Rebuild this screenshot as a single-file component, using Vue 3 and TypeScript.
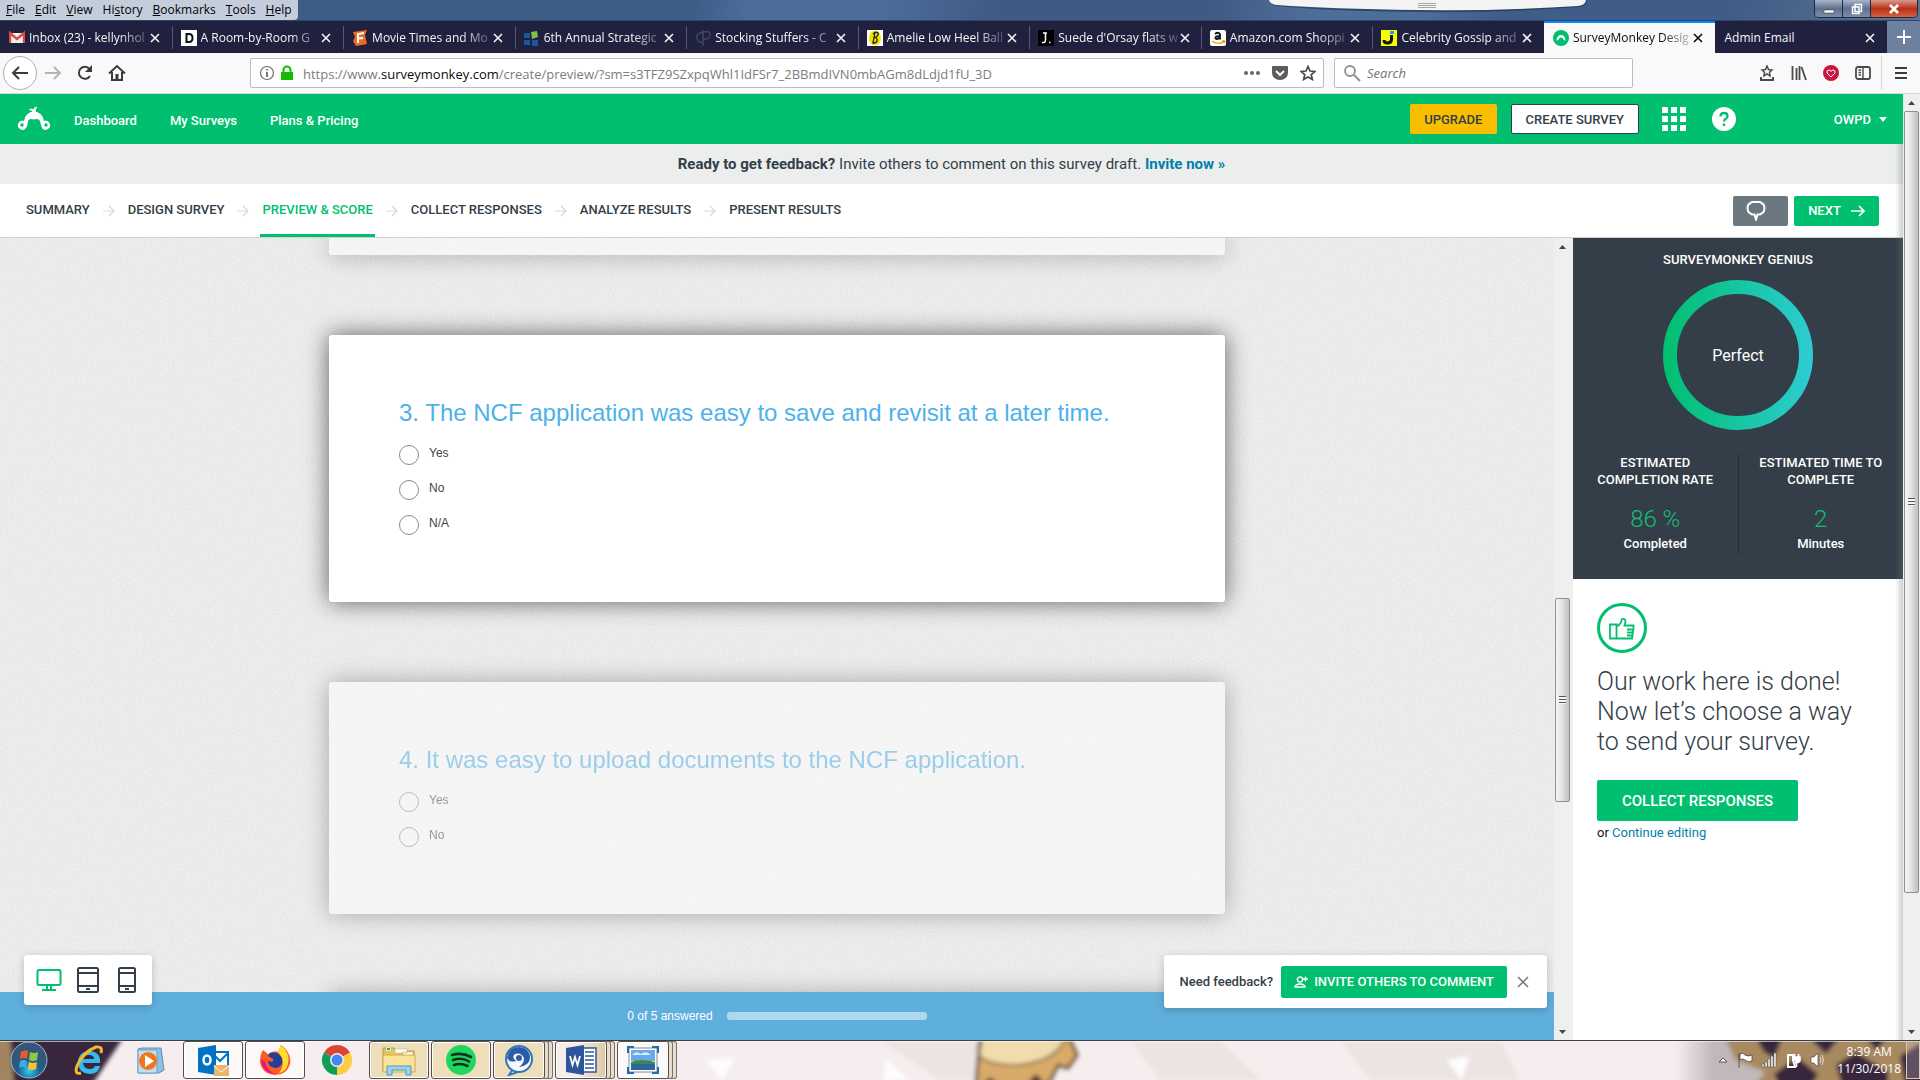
<script setup lang="ts">
import { ref } from 'vue'

interface Tab {
  title: string
  icon: string
  active?: boolean
}

interface Question {
  id: number
  text: string
  options: string[]
  current: boolean
}

const menus: string[][] = [
  ['', 'F', 'ile'],
  ['', 'E', 'dit'],
  ['', 'V', 'iew'],
  ['Hi', 's', 'tory'],
  ['', 'B', 'ookmarks'],
  ['', 'T', 'ools'],
  ['', 'H', 'elp'],
]

const tabs: Tab[] = [
  { title: 'Inbox (23) - kellynhol', icon: 'gmail' },
  { title: 'A Room-by-Room G', icon: 'domino' },
  { title: 'Movie Times and Mo', icon: 'fandango' },
  { title: '6th Annual Strategic', icon: 'squares' },
  { title: 'Stocking Stuffers - C', icon: 'cp' },
  { title: 'Amelie Low Heel Ball', icon: 'bee' },
  { title: "Suede d'Orsay flats w", icon: 'jcrew' },
  { title: 'Amazon.com Shoppi', icon: 'amazon' },
  { title: 'Celebrity Gossip and', icon: 'jared' },
  { title: 'SurveyMonkey Desig', icon: 'monkey', active: true },
  { title: 'Admin Email', icon: '' },
]

const steps = ['SUMMARY', 'DESIGN SURVEY', 'PREVIEW & SCORE', 'COLLECT RESPONSES', 'ANALYZE RESULTS', 'PRESENT RESULTS']
const activeStep = 'PREVIEW & SCORE'

const questions: Question[] = [
  {
    id: 3,
    text: '3. The NCF application was easy to save and revisit at a later time.',
    options: ['Yes', 'No', 'N/A'],
    current: true,
  },
  {
    id: 4,
    text: '4. It was easy to upload documents to the NCF application.',
    options: ['Yes', 'No'],
    current: false,
  },
]

const answers = ref<Record<number, string>>({})
const search = ref('')
</script>

<template>
  <div class="desktop">
    <header class="titlebar">
      <nav class="menubar">
        <button v-for="m in menus" :key="m[1]" type="button">{{ m[0] }}<u>{{ m[1] }}</u>{{ m[2] }}</button>
      </nav>
      <svg class="drawer" viewBox="0 0 320 16" width="320" height="16">
        <path d="M0 0H318Q318 6 310 7Q230 13 150 12Q60 11 8 6Q0 5 0 0Z" fill="#16324f" opacity=".6" />
        <path d="M0 0H317Q317 5 309 6Q230 11 150 10Q60 9 8 5Q0 4 0 0Z" fill="#f4f4f4" />
        <path d="M149 3.500H167M149 5.500H167M149 7.500H167" stroke="#a5a5a5" />
      </svg>
      <div class="window-buttons">
        <button type="button" aria-label="Minimize"><svg width="12" height="12" viewBox="0 0 12 12"><path d="M1 7H11V10H1Z" fill="#fff" stroke="#444" stroke-width=".6" /></svg></button>
        <button type="button" aria-label="Restore"><svg width="12" height="12" viewBox="0 0 12 12"><path d="M4 1.500H10.500V8.500H4ZM1.500 4H8V10.500H1.500Z" fill="#71809b" stroke="#fff" stroke-width="1.500" /></svg></button>
        <button type="button" class="shut" aria-label="Close window"><svg width="12" height="12" viewBox="0 0 12 12"><path d="M2 2L10 10M10 2L2 10" stroke="#fff" stroke-width="2.600" /></svg></button>
      </div>
    </header>

    <nav class="tabs">
      <div v-for="t in tabs" :key="t.title" class="tab" :class="{ active: t.active }">
        <svg v-if="t.icon" class="fav" viewBox="0 0 16 16" width="16" height="16">
          <template v-if="t.icon === 'gmail'">
            <path d="M1 3H15V13H1Z" fill="#f1efef" /><path d="M1 13V3L8 9L15 3V13" fill="none" stroke="#dd4b3e" stroke-width="2.400" />
          </template>
          <template v-else-if="t.icon === 'domino'">
            <path d="M0 0H16V16H0Z" fill="#fff" /><path d="M5.500 4H8Q11.500 4 11.500 8T8 12H5.500Z" fill="none" stroke="#111" stroke-width="2" />
          </template>
          <template v-else-if="t.icon === 'fandango'">
            <path d="M1 2L15 0L13 5L15 14L4 16L1 11L3 7Z" fill="#f26a21" /><path d="M6 13V4L12 3M6 8.500L11 8" stroke="#fff" stroke-width="2" fill="none" />
          </template>
          <template v-else-if="t.icon === 'squares'">
            <path d="M0 3H6V8H0ZM0 10H6V15H0ZM8 10H14V16H8Z" fill="#1b57a0" /><path d="M7 2L13 1L14 7L8 9Z" fill="#7fc242" />
          </template>
          <template v-else-if="t.icon === 'cp'">
            <path d="M9 3A5 5 0 1 0 9 12M8 0V16M8 2Q15 0 15 5T8 9" fill="none" stroke="#3c4656" stroke-width="1.600" />
          </template>
          <template v-else-if="t.icon === 'bee'">
            <path d="M0 0H16V16H0Z" fill="#fff" /><ellipse cx="8" cy="8" rx="6" ry="7.500" fill="#f3e100" /><path d="M8 2L6 13Q11 13 10 9Q9 7 7 8Q12 6 11 3Q9 1 6 4" fill="none" stroke="#222" stroke-width="1.300" />
          </template>
          <template v-else-if="t.icon === 'jcrew'">
            <path d="M0 0H16V16H0Z" fill="#000" /><path d="M5 3H9M7.500 3V10Q7.500 13 4 12.500M11 12.500H12.500" fill="none" stroke="#fff" stroke-width="1.500" />
          </template>
          <template v-else-if="t.icon === 'amazon'">
            <rect width="16" height="16" rx="2" fill="#fff" /><path d="M5 4Q8 1.500 10 4V9.500M10 6Q5 6 5.500 8.300Q7 10 10 7.500" fill="none" stroke="#111" stroke-width="1.800" /><path d="M2 11Q8 15.500 14 11.500M12 11H14.500V13" fill="none" stroke="#f90" stroke-width="1.400" />
          </template>
          <template v-else-if="t.icon === 'jared'">
            <path d="M0 0H16V16H0Z" fill="#f5ff00" /><path d="M10.500 5V10Q10 13 6.500 13T3 10" fill="none" stroke="#111" stroke-width="3" /><path d="M9 1H13V4H9Z" fill="#2b9be8" />
          </template>
          <template v-else>
            <circle cx="8" cy="8" r="8" fill="#00bf6f" /><path d="M3.500 10.500Q4 5 8 5T12.500 10.500Q10 10.500 10 8.500Q8 6.500 6 8.500Q6 10.500 3.500 10.500Z" fill="#fff" />
          </template>
        </svg>
        <span class="tab-title" :class="{ fades: t.icon }">{{ t.title }}</span>
        <button type="button" class="tab-close" aria-label="Close tab">
          <svg width="10" height="10" viewBox="0 0 10 10"><path d="M1 1L9 9M9 1L1 9" stroke="currentColor" stroke-width="1.600" /></svg>
        </button>
      </div>
      <button type="button" class="tab-add" aria-label="New tab">
        <svg width="14" height="14" viewBox="0 0 14 14"><path d="M7 0V14M0 7H14" stroke="#fff" stroke-width="2" /></svg>
      </button>
    </nav>

    <div class="toolbar">
      <button type="button" class="tool back" aria-label="Back">
        <svg width="18" height="18" viewBox="0 0 18 18"><path d="M17 9H2M8 3L2 9L8 15" fill="none" stroke="#3b3b3d" stroke-width="2" /></svg>
      </button>
      <button type="button" class="tool" aria-label="Forward">
        <svg width="18" height="18" viewBox="0 0 18 18"><path d="M1 9H16M10 3L16 9L10 15" fill="none" stroke="#b4b4b6" stroke-width="2" /></svg>
      </button>
      <button type="button" class="tool" aria-label="Reload">
        <svg width="18" height="18" viewBox="0 0 18 18"><path d="M14 12A6 6 0 1 1 13.500 5" fill="none" stroke="#3b3b3d" stroke-width="2" /><path d="M16 1V8H9Z" fill="#3b3b3d" /></svg>
      </button>
      <button type="button" class="tool" aria-label="Home">
        <svg width="18" height="18" viewBox="0 0 18 18"><path d="M1 9.500L9 2L17 9.500M4 8V16H14V8" fill="none" stroke="#3b3b3d" stroke-width="2" /><path d="M7.500 10H10.500V16H7.500Z" fill="#3b3b3d" /></svg>
      </button>
      <div class="urlbar">
        <svg width="16" height="16" viewBox="0 0 16 16"><circle cx="8" cy="8" r="6.500" fill="none" stroke="#6b6b6d" stroke-width="1.200" /><path d="M8 7V12M8 4V5.500" stroke="#6b6b6d" stroke-width="1.800" /></svg>
        <svg width="16" height="16" viewBox="0 0 16 16"><path d="M2 7H14V15H2Z" fill="#12bc00" /><path d="M4.500 8V5A3.500 3.500 0 0 1 11.500 5V8" fill="none" stroke="#12bc00" stroke-width="2" /></svg>
        <a href="#" class="url">https://www.<b>surveymonkey.com</b>/create/preview/?sm=s3TFZ9SZxpqWhl1IdFSr7_2BBmdIVN0mbAGm8dLdjd1fU_3D</a>
        <svg width="16" height="16" viewBox="0 0 16 16"><circle cx="2" cy="8" r="2" fill="#666" /><circle cx="8" cy="8" r="2" fill="#666" /><circle cx="14" cy="8" r="2" fill="#666" /></svg>
        <svg width="16" height="16" viewBox="0 0 16 16"><path d="M0 2Q0 1 1 1H15Q16 1 16 2V8A8 7 0 0 1 0 8Z" fill="#5c5c5e" /><path d="M4 6L8 10L12 6" fill="none" stroke="#fff" stroke-width="2" /></svg>
        <svg width="16" height="16" viewBox="0 0 16 16"><path d="M8 1.500L10 6L15 6.400L11.200 9.700L12.400 14.500L8 12L3.600 14.500L4.800 9.700L1 6.400L6 6Z" fill="none" stroke="#4a4a4c" stroke-width="1.700" /></svg>
      </div>
      <label class="searchbar">
        <svg width="18" height="18" viewBox="0 0 18 18"><circle cx="7" cy="7" r="5" fill="none" stroke="#8f8f91" stroke-width="1.800" /><path d="M11 11L17 17" stroke="#8f8f91" stroke-width="2" /></svg>
        <input v-model="search" type="text" placeholder="Search" aria-label="Search" />
      </label>
      <div class="tool-icons">
        <svg width="16" height="16" viewBox="0 0 16 16"><path d="M8 1L9.500 4.500L13 5L10.500 7.300L11 11L8 9L5 11L5.500 7.300L3 5L6.500 4.500Z" fill="none" stroke="#4a4a4c" stroke-width="1.500" /><path d="M2 12V15H14V12" fill="none" stroke="#4a4a4c" stroke-width="2" /></svg>
        <svg width="16" height="16" viewBox="0 0 16 16"><path d="M1.500 1V15M5.500 3V15M8.500 1V15M10.500 2L15 15" stroke="#4a4a4c" stroke-width="1.800" /></svg>
        <svg width="16" height="16" viewBox="0 0 16 16"><circle cx="8" cy="8" r="8" fill="#c8173f" /><path d="M8 12L4 8Q3.500 5 6 5Q7.500 5 8 6.500Q8.500 5 10 5Q12.500 5 12 8Z" fill="none" stroke="#fff" /></svg>
        <svg width="16" height="16" viewBox="0 0 16 16"><rect x="1" y="2" width="14" height="12" rx="2" fill="none" stroke="#4a4a4c" stroke-width="1.800" /><path d="M8 2V14M3.500 5H6M3.500 7.500H6M3.500 10H6" stroke="#4a4a4c" stroke-width="1.400" /></svg>
      </div>
      <button type="button" class="burger" aria-label="Menu">
        <svg width="12" height="12" viewBox="0 0 12 12"><path d="M0 1H12M0 6H12M0 11H12" stroke="#3b3b3d" stroke-width="2" /></svg>
      </button>
    </div>

    <div class="viewport">
      <div class="page">
        <header class="brandbar">
          <a href="#" class="logo" aria-label="Home page">
            <svg width="36" height="26" viewBox="0 0 36 26">
              <path d="M8 15Q9.500 6 18 5.500Q26.500 6 28 15A4.500 4.500 0 1 1 26 22Q24 16 24 15Q22.500 12 18 13.500Q13.500 12 12 15Q12 19 10 22A4.500 4.500 0 1 1 8 15Z" fill="#fff" />
              <path d="M18 7Q15 3 13.500 3.500Q16 2.500 18 4Q18 1.500 20.500 1Q18.800 3 19.500 7Z" fill="#fff" stroke="#fff" />
              <circle cx="6" cy="19" r="1.700" fill="#00bf6f" /><circle cx="30" cy="19" r="1.700" fill="#00bf6f" />
            </svg>
          </a>
          <nav class="brand-links">
            <a href="#">Dashboard</a>
            <a href="#">My Surveys</a>
            <a href="#">Plans &amp; Pricing</a>
          </nav>
          <button type="button" class="upgrade">UPGRADE</button>
          <button type="button" class="create">CREATE SURVEY</button>
          <button type="button" class="glyph apps" aria-label="Apps">
            <svg width="24" height="24" viewBox="0 0 24 24"><path d="M0 0H6V6H0ZM9 0H15V6H9ZM18 0H24V6H18ZM0 9H6V15H0ZM9 9H15V15H9ZM18 9H24V15H18ZM0 18H6V24H0ZM9 18H15V24H9ZM18 18H24V24H18Z" fill="#fff" /></svg>
          </button>
          <button type="button" class="glyph help" aria-label="Help">
            <svg width="24" height="24" viewBox="0 0 24 24"><circle cx="12" cy="12" r="12" fill="#fff" /><path d="M8.500 9.500Q8.500 6 12 6T15.500 9.200Q15.500 11 13.500 12Q12 12.800 12 14.500M12 16.500V19" fill="none" stroke="#00bf6f" stroke-width="2.300" /></svg>
          </button>
          <button type="button" class="account">OWPD <svg width="8" height="5" viewBox="0 0 8 5"><path d="M0 0H8L4 5Z" fill="#fff" /></svg></button>
        </header>

        <p class="notice"><b>Ready to get feedback?</b> Invite others to comment on this survey draft. <a href="#">Invite now »</a></p>

        <div class="stepbar">
          <nav class="steps">
            <template v-for="(s, i) in steps" :key="s">
              <svg v-if="i" width="12" height="12" viewBox="0 0 12 12"><path d="M0 6H11M6 1L11 6L6 11" fill="none" stroke="#d5d8da" stroke-width="1.200" /></svg>
              <a href="#" :class="{ on: s === activeStep }">{{ s }}</a>
            </template>
          </nav>
          <button type="button" class="comment" aria-label="Comments">
            <svg width="22" height="20" viewBox="0 0 22 20"><path d="M7 1H15L18.500 3.500Q20.500 7 18.500 11L15 13.500H12.500L11 18.500L9.500 13.500H7L3.500 11Q1.500 7 3.500 3.500Z" fill="none" stroke="#fff" stroke-width="2" /></svg>
          </button>
          <button type="button" class="next">NEXT <svg width="14" height="12" viewBox="0 0 14 12"><path d="M0 6H13M8 1L13 6L8 11" fill="none" stroke="#fff" stroke-width="1.600" /></svg></button>
        </div>

        <div class="workspace">
          <main class="preview">
            <svg class="grain" aria-hidden="true">
              <filter id="grain"><feTurbulence type="fractalNoise" baseFrequency=".6" numOctaves="2" seed="4" /><feColorMatrix values="0 0 0 0 .38  0 0 0 0 .38  0 0 0 0 .38  .25 0 0 0 -.07" /></filter>
              <rect width="100%" height="100%" filter="url(#grain)" />
            </svg>
            <div class="cards">
              <section class="card faded tail"></section>
              <section v-for="q in questions" :key="q.id" class="card" :class="{ faded: !q.current }">
                <fieldset>
                  <legend>{{ q.text }}</legend>
                  <label v-for="o in q.options" :key="o" class="option">
                    <input v-model="answers[q.id]" type="radio" :name="'q' + q.id" :value="o" />
                    <span>{{ o }}</span>
                  </label>
                </fieldset>
              </section>
              <section class="card faded upcoming"></section>
            </div>
            <footer class="progressbar">
              <span>0 of 5 answered</span>
              <span class="meter"></span>
            </footer>
            <div class="devices">
              <button type="button" aria-label="Desktop"><svg width="26" height="24" viewBox="0 0 26 24"><rect x="1.500" y="2" width="23" height="15" rx="1.500" fill="none" stroke="#00bf6f" stroke-width="2" /><path d="M11 17V21M15 17V21M6 22H20" stroke="#00bf6f" stroke-width="2" /></svg></button>
              <button type="button" aria-label="Tablet"><svg width="22" height="26" viewBox="0 0 22 26"><rect x="1" y="1" width="20" height="24" rx="1.500" fill="none" stroke="#333e48" stroke-width="2" /><path d="M1 6H21M1 19H21M9 22H13" stroke="#333e48" stroke-width="2" /></svg></button>
              <button type="button" aria-label="Phone"><svg width="18" height="26" viewBox="0 0 18 26"><rect x="1" y="1" width="16" height="24" rx="1.500" fill="none" stroke="#333e48" stroke-width="2" /><path d="M1 6H17M1 19H17M7 22H11" stroke="#333e48" stroke-width="2" /></svg></button>
            </div>
            <div class="feedback">
              <b>Need feedback?</b>
              <button type="button" class="invite"><svg width="14" height="12" viewBox="0 0 14 12"><circle cx="6" cy="3.500" r="2.600" fill="none" stroke="#fff" stroke-width="1.400" /><path d="M1 11Q1.500 8 6 8T11 11ZM9 3H14M11.500 .5V5.500" fill="none" stroke="#fff" stroke-width="1.300" /></svg>INVITE OTHERS TO COMMENT</button>
              <button type="button" class="dismiss" aria-label="Dismiss"><svg width="12" height="12" viewBox="0 0 12 12"><path d="M1 1L11 11M11 1L1 11" stroke="#6b787f" stroke-width="1.500" /></svg></button>
            </div>
          </main>

          <div class="scroll inner">
            <svg width="17" height="17" viewBox="0 0 17 17"><path d="M5 11H12L8.500 7Z" fill="#444" /></svg>
            <i class="before"></i>
            <i class="thumb"><i class="grip"></i></i>
            <i class="after"></i>
            <svg width="17" height="17" viewBox="0 0 17 17"><path d="M5 7H12L8.500 11Z" fill="#444" /></svg>
          </div>

          <aside class="side">
            <section class="genius">
              <h2>SURVEYMONKEY GENIUS</h2>
              <div class="ring">
                <svg width="150" height="150" viewBox="0 0 150 150">
                  <defs><linearGradient id="score" gradientUnits="userSpaceOnUse" x1="0" y1="0" x2="150" y2="0"><stop offset="0" stop-color="#00bf6f" /><stop offset="1" stop-color="#2dccd3" /></linearGradient></defs>
                  <circle cx="75" cy="75" r="68" fill="none" stroke="url(#score)" stroke-width="14" />
                </svg>
                <span>Perfect</span>
              </div>
              <div class="stats">
                <div><h3>ESTIMATED<br />COMPLETION RATE</h3><strong>86 %</strong><em>Completed</em></div>
                <div><h3>ESTIMATED TIME TO<br />COMPLETE</h3><strong>2</strong><em>Minutes</em></div>
              </div>
            </section>
            <section class="done">
              <svg width="50" height="50" viewBox="0 0 50 50"><circle cx="25" cy="25" r="23.500" fill="none" stroke="#00bf6f" stroke-width="3" /><path d="M13 21.500H19.500V35.500H13ZM19.500 22.500H21.500Q24.500 20 25 16Q28.500 15 28.500 19L27.500 22.500H36.500V25.500L35 35.500H19.500M30 26.500H36.500M30 29.500H36M30 32.500H35.500" fill="none" stroke="#00bf6f" stroke-width="1.800" /></svg>
              <h2>Our work here is done!<br />Now let’s choose a way<br />to send your survey.</h2>
              <button type="button" class="collect">COLLECT RESPONSES</button>
              <p>or <a href="#">Continue editing</a></p>
            </section>
          </aside>
        </div>
      </div>

      <div class="scroll outer">
        <svg width="17" height="17" viewBox="0 0 17 17"><path d="M5 11H12L8.500 7Z" fill="#444" /></svg>
        <i class="thumb"><i class="grip"></i></i>
        <i class="after"></i>
        <svg width="17" height="17" viewBox="0 0 17 17"><path d="M5 7H12L8.500 11Z" fill="#444" /></svg>
      </div>
    </div>

    <footer class="taskbar">
      <svg class="wallpaper" viewBox="0 0 1920 40" preserveAspectRatio="none" aria-hidden="true">
        <defs>
          <filter id="soft"><feGaussianBlur stdDeviation="2" /></filter>
          <linearGradient id="fade"><stop offset="0" stop-color="#f6eeee" /><stop offset=".15" stop-color="#c0b8ba" /><stop offset="1" stop-color="#c0b8ba" /></linearGradient>
        </defs>
        <path d="M0 0H1920V40H0Z" fill="#f6eeee" />
        <g filter="url(#soft)">
          <path d="M-5 -5H125L92 45H-5Z" fill="#37263c" /><path d="M-5 -5H10L14 45H-5Z" fill="#a18560" />
          <path d="M880 0H1000L1010 40H940ZM1130 0H1220L1260 40H1160ZM1340 0H1500L1520 40H1370Z" fill="#ece3e3" />
          <path d="M706 20L735 18L722 40ZM886 20L910 40H884ZM1446 20L1470 16L1462 40Z" fill="#fdfdfd" />
          <path d="M980 -5H1068L1077 15L1068 28L1058 25L1048 45H976Z" fill="#d9ab6a" stroke="#55453a" stroke-width="3" />
          <path d="M982 -5H1066Q1060 20 1020 25Q990 26 979 16Z" fill="#f1dcae" stroke="#7a5e38" stroke-width="2" />
          <path d="M984 45Q990 30 997 45M1028 45Q1036 24 1044 45" fill="#5c4637" />
          <path d="M1675 -5H1930V45H1675Z" fill="url(#fade)" />
          <path d="M1724 -5H1930V45H1755L1765 32L1735 20Z" fill="#a98a60" />
          <path d="M1754 -5H1784L1774 18L1764 12ZM1806 -5H1842L1826 14ZM1774 34L1797 17L1818 34L1812 45H1779ZM1864 -5H1890L1876 10ZM1836 25L1856 12L1888 32V45H1842ZM1900 16L1925 0V45H1905Z" fill="#37263c" />
        </g>
        <path d="M0 .5H1920" stroke="#3a3f47" /><path d="M0 1.500H1920" stroke="#fff" opacity=".6" />
      </svg>
      <div class="apps-row">
        <button type="button" class="app start" aria-label="Start"><svg width="38" height="38" viewBox="0 0 38 38"><defs><radialGradient id="orb" cy=".8"><stop offset="0" stop-color="#2fd0f8" /><stop offset=".6" stop-color="#1d5e8c" /><stop offset="1" stop-color="#35567a" /></radialGradient></defs><circle cx="19" cy="19" r="18" fill="url(#orb)" stroke="#9fbccb" /><path d="M11 11Q15 8 18 10L17 18Q14 16 10 18Z" fill="#ea5b2a" /><path d="M20 11Q24 13 28 11L27 19Q23 21 19 19Z" fill="#93c83e" /><path d="M10 20Q14 18 17 20L16 27Q13 25 9 27Z" fill="#48a6e2" /><path d="M19 21Q23 23 27 21L26 28Q22 30 18 28Z" fill="#fbc32c" /></svg></button>
        <button type="button" class="app" aria-label="Internet Explorer"><svg width="32" height="32" viewBox="0 0 32 32"><path d="M27 19H10Q11 25 17 25Q21 25 22 22H27Q25 30 17 30Q5 29 5 18Q6 7 17 7Q28 8 27 19ZM10 15H21Q21 11 16 11Q11 11 10 15Z" fill="#37b8ee" /><path d="M28 9Q30 2 23 3Q10 8 4 22Q1 31 8 29" fill="none" stroke="#f0bd28" stroke-width="3" /></svg></button>
        <button type="button" class="app" aria-label="Media Player"><svg width="32" height="32" viewBox="0 0 32 32"><path d="M7 4H26L29 26L24 29H3V5Z" fill="#8fc0e2" stroke="#5a91ba" /><path d="M3 6H22V29H3Z" fill="#c4def0" stroke="#6ba0c5" /><circle cx="13" cy="17" r="9" fill="#f0761e" /><path d="M10 11L19 17L10 23Z" fill="#fff" /></svg></button>
        <button type="button" class="app open" aria-label="Outlook"><svg width="32" height="32" viewBox="0 0 32 32"><path d="M18 8H31V24H18Z" fill="#fff" stroke="#0072c6" stroke-width="2" /><path d="M18 12L23 17L31 9" fill="none" stroke="#0072c6" stroke-width="2" /><path d="M1 4L19 1V31L1 28Z" fill="#0072c6" /><ellipse cx="10" cy="16" rx="3.500" ry="4.500" fill="none" stroke="#fff" stroke-width="2.500" /><path d="M17 21H32V32H17Z" fill="#eab36e" /><path d="M17 22L24 28L32 22" fill="none" stroke="#fff" /></svg></button>
        <button type="button" class="app open" aria-label="Firefox"><svg width="32" height="32" viewBox="0 0 32 32"><path d="M4 6L9 10Q15 6 19 8L22 1Q33 9 31 20Q28 31 16 31Q3 30 1 18Q1 10 4 6Z" fill="#ff5a25" /><path d="M22 1Q32 10 29 20Q27 28 20 29Q28 19 19 8Z" fill="#ffdd30" /><path d="M11 9Q19 7 23 14Q25 22 17 24Q9 23 9 17Q16 19 14 15L9 12Z" fill="#1f3f99" /><path d="M2 15Q3 30 18 30Q8 28 6 18Z" fill="#e31587" /></svg></button>
        <button type="button" class="app" aria-label="Chrome"><svg width="32" height="32" viewBox="0 0 32 32"><path d="M16 16L3 8.500A15 15 0 0 1 29 8.500Z" fill="#db4437" /><path d="M16 16L29 8.500A15 15 0 0 1 16 31Z" fill="#ffcd40" /><path d="M16 16L16 31A15 15 0 0 1 3 8.500Z" fill="#0f9d58" /><circle cx="16" cy="16" r="7" fill="#f1f1f1" /><circle cx="16" cy="16" r="5.500" fill="#4285f4" /></svg></button>
        <button type="button" class="app open tan" aria-label="Explorer"><svg width="34" height="32" viewBox="0 0 34 32"><path d="M1 4H12L14 7H32V27H1Z" fill="#e9c558" stroke="#bd963a" /><path d="M4 3H9V7H4ZM13 5H25V9H13ZM21 8H31V12H21Z" fill="#fff" stroke="#b9aa80" stroke-width=".5" /><path d="M5 4H8V6H5Z" fill="#3aab3a" /><path d="M1 11H33V28H1Z" fill="#f7e399" stroke="#d0ad50" /><path d="M5 31V22H29V31H24V26H10V31Z" fill="#9bd2ee" stroke="#4c9ac4" /></svg></button>
        <button type="button" class="app open tan" aria-label="Spotify"><svg width="30" height="30" viewBox="0 0 30 30"><circle cx="15" cy="15" r="15" fill="#1ed760" /><path d="M6 10Q16 7 25 12M7 15Q16 12 23 16.500M8 20Q15 17.500 21.500 21" fill="none" stroke="#17301e" stroke-width="2.600" stroke-linecap="round" /></svg></button>
        <button type="button" class="app open tan stack" aria-label="Chat"><svg width="30" height="32" viewBox="0 0 30 32"><path d="M9 25L5 31L17 27Z" fill="#f4f8fc" stroke="#3477b8" stroke-width="2" /><circle cx="15" cy="15" r="13" fill="#f4f8fc" stroke="#3477b8" stroke-width="2" /><path d="M3 14Q5 3 15 3Q26 4 26 14Q25 22 15 23Q20 20 20 14Q17 8 11 10Q7 13 12 17Q6 19 3 14Z" fill="#2a5ca8" /><circle cx="15" cy="14" r="3" fill="#2a5ca8" /></svg></button>
        <button type="button" class="app open tan stack two" aria-label="Word"><svg width="32" height="32" viewBox="0 0 32 32"><path d="M16 4H31V28H16Z" fill="#fff" stroke="#2b579a" stroke-width="1.500" /><path d="M20 8H29M20 12H29M20 16H29M20 20H29M20 24H29" stroke="#2b579a" stroke-width="1.500" /><path d="M1 4L19 1V31L1 28Z" fill="#2b579a" /><path d="M5 12L7.500 21L10 13L12.500 21L15 12" fill="none" stroke="#fff" stroke-width="1.800" /></svg></button>
        <button type="button" class="app open stack" aria-label="Pictures"><svg width="32" height="28" viewBox="0 0 32 28"><path d="M2 2H30V26H2Z" fill="#fff" stroke="#888" /><path d="M4 4H28V15H4Z" fill="#69a9ea" /><path d="M5 9Q9 4 14 8Q19 4 24 9Z" fill="#d8ecfa" /><path d="M4 16Q14 12 28 16V20H4Z" fill="#3b8a4c" /><path d="M4 18H28V24H4Z" fill="#2c679a" /><path d="M1 7V1H7M25 1H31V7M31 21V27H25M7 27H1V21" fill="none" stroke="#1f6fb0" stroke-width="2" /></svg></button>
      </div>
      <div class="tray">
        <svg width="12" height="16" viewBox="0 0 12 16"><path d="M2 10L6 6L10 10Z" fill="#fff" stroke="#555" /></svg>
        <svg width="16" height="16" viewBox="0 0 16 16"><path d="M2 1V16M3 2Q6 0 8 3Q11 5 15 3V9Q11 11 8 8Q6 6 3 8Z" fill="#fff" stroke="#333" stroke-width=".7" /></svg>
        <svg width="16" height="16" viewBox="0 0 16 16"><path d="M1 12H3V15H1ZM4 10H6V15H4ZM7 7H9V15H7ZM10 4H12V15H10ZM13 1H15V15H13Z" fill="#fff" stroke="#444" stroke-width=".5" /></svg>
        <svg width="16" height="16" viewBox="0 0 16 16"><path d="M3 3H8V8Q9 12 10 15H3Z" fill="none" stroke="#fff" stroke-width="2" /><path d="M8 5H15V9Q14 11 11.500 11V15M9.500 2V5M13.500 2V5" fill="#fff" stroke="#fff" stroke-width="1.600" /></svg>
        <svg width="16" height="16" viewBox="0 0 16 16"><path d="M2 5H5L9 1V15L5 11H2Z" fill="#fff" stroke="#333" stroke-width=".6" /><path d="M11 5Q13 8 11 11M13 3Q16 8 13 13" fill="none" stroke="#ddd" /></svg>
        <time><span>8:39 AM</span><span>11/30/2018</span></time>
        <button type="button" class="peek" aria-label="Show desktop"></button>
      </div>
    </footer>
  </div>
</template>

<style>
html,
body {
  height: 100%;
  overflow: hidden;
}
</style>

<style scoped>
.desktop {
  --green: #00bf6f;
  --ink: #333e48;
  --sys: 'Open Sans', 'Noto Sans', sans-serif;
  display: flex;
  flex-direction: column;
  height: 100vh;
  font-family: Roboto, 'Liberation Sans', sans-serif;
  color: var(--ink);
}
.desktop *,
.desktop *::before,
.desktop *::after {
  box-sizing: border-box;
}
button {
  display: flex;
  align-items: center;
  justify-content: center;
  padding: 0;
  border: 0;
  background: none;
  font: inherit;
  color: inherit;
  white-space: nowrap;
}
a {
  color: inherit;
  text-decoration: none;
}
svg {
  flex: none;
  display: block;
}
h2,
h3,
p {
  margin: 0;
}

.titlebar {
  position: relative;
  display: flex;
  justify-content: space-between;
  height: 21px;
  background: linear-gradient(100deg, #3d5c86 0 36%, #4d6c99 39% 46%, #3f5b84 52% 63%, #4f6d99 68% 74%, #405d87 78% 90%, #5d7292);
  border-bottom: 1px solid #2b4567;
}
.menubar {
  display: flex;
  height: 20px;
  gap: 10px;
  padding: 0 6px;
  border-radius: 0 0 4px 0;
  background: #c3cddc;
  font: 12px/20px var(--sys);
  color: #000;
}
.drawer {
  position: absolute;
  top: 0;
  right: 331px;
}
.window-buttons {
  display: flex;
  height: 18px;
  margin-right: 2px;
  border: 1px solid #1f2c42;
  border-top: 0;
  border-radius: 0 0 5px 5px;
  overflow: hidden;
}
.window-buttons button {
  width: 28px;
  background: linear-gradient(#a9b5c8, #5f7190 50%, #7d8ca6);
  border-right: 1px solid #1f2c42;
}
.window-buttons .shut {
  width: 46px;
  border: 0;
  background: linear-gradient(#dc9a8c, #b8321a 50%, #d4603c);
}

.tabs {
  display: flex;
  height: 32px;
  background: #20213f;
  font: 12px/16px var(--sys);
  color: #f5f5f8;
}
.tab {
  position: relative;
  display: flex;
  align-items: center;
  flex: 1;
  min-width: 0;
  padding: 2px 12px 0 9px;
}
.tab::before {
  content: '';
  position: absolute;
  left: 0;
  top: 5px;
  height: 23px;
  border-left: 1px solid #585972;
}
.tab:first-child::before,
.tab.active::before,
.tab.active + .tab::before {
  display: none;
}
.tab.active {
  background: #f9f9fa;
  color: #0c0c0d;
  box-shadow: inset 0 2px #0a84ff;
}
.fav {
  margin-right: 4px;
}
.tab-title {
  flex: 1;
  white-space: nowrap;
}
.tab-title.fades {
  mask-image: linear-gradient(90deg, #000 calc(100% - 30px), rgb(0 0 0 / 20%));
}
.tab-close {
  width: 10px;
  margin-left: 2px;
}
.tab-add {
  width: 33px;
  background: #6e80a0;
}

.toolbar {
  display: flex;
  align-items: center;
  height: 41px;
  padding-left: 3px;
  background: #f9f9fa;
  border-bottom: 1px solid #d8d8da;
}
.tool {
  width: 32px;
  height: 34px;
}
.tool.back {
  width: 34px;
  border: 1px solid #b0b0b2;
  border-radius: 50%;
  background: #fff;
}
.urlbar,
.searchbar {
  display: flex;
  align-items: center;
  height: 30px;
  border: 1px solid #bdbdbf;
  border-radius: 2px;
  background: #fff;
  font: 13px/20px var(--sys);
}
.urlbar {
  flex: 1;
  gap: 12px;
  margin-left: 117px;
  padding: 0 7px 0 8px;
  color: #7c7c7e;
}
.urlbar svg + svg:nth-child(2) {
  margin-left: -8px;
}
.url {
  flex: 1;
  margin-left: -4px;
  padding-top: 1px;
  white-space: nowrap;
}
.url b {
  font-weight: 400;
  color: #0c0c0d;
}
.searchbar {
  width: 299px;
  margin: 0 126px 0 10px;
  padding: 0 8px;
  gap: 6px;
}
.searchbar input {
  flex: 1;
  min-width: 0;
  border: 0;
  outline: 0;
  padding: 0;
  background: none;
  font: italic 13px/20px var(--sys);
}
.searchbar input::placeholder {
  color: #737375;
}
.tool-icons {
  display: flex;
  gap: 16px;
  padding-right: 10px;
}
.burger {
  width: 39px;
  height: 34px;
  border-left: 1px solid #d8d8da;
}

.viewport {
  display: flex;
  flex: 1;
  min-height: 0;
}
.page {
  position: relative;
  display: flex;
  flex-direction: column;
  flex: 1;
  min-width: 0;
  background: #fff;
}
.page::after {
  content: '';
  position: absolute;
  top: 50px;
  right: 0;
  bottom: 0;
  width: 8px;
  background: linear-gradient(90deg, transparent, rgb(110 120 120 / 35%));
}
.brandbar {
  display: flex;
  align-items: center;
  height: 50px;
  padding: 0 16px;
  background: var(--green);
  color: #fff;
  font-size: 13px;
  font-weight: 500;
}
.brand-links {
  display: flex;
  flex: 1;
  gap: 33px;
  margin-left: 22px;
  padding-top: 2px;
}
.upgrade,
.create {
  height: 30px;
  border-radius: 2px;
  color: var(--ink);
}
.upgrade {
  width: 87px;
  margin-right: 14px;
  background: #f9be00;
}
.create {
  width: 128px;
  border: 1px solid var(--ink);
  background: #fff;
}
.apps {
  margin-left: 23px;
}
.help {
  margin-left: 26px;
}
.account {
  gap: 8px;
  margin-left: 98px;
}
.notice {
  height: 40px;
  background: #ebeeed;
  font-size: 15px;
  line-height: 40px;
  text-align: center;
}
.notice b,
.notice a {
  font-weight: 700;
}
.notice a {
  color: #007faa;
}
.stepbar {
  display: flex;
  align-items: center;
  height: 54px;
  padding: 0 24px 0 26px;
  border-bottom: 1px solid #d0d2d3;
  font-size: 13px;
  font-weight: 500;
}
.steps {
  display: flex;
  align-items: center;
  flex: 1;
  gap: 13px;
}
.steps a {
  height: 53px;
  margin: 0 -2px;
  padding: 0 2px;
  line-height: 52px;
}
.steps .on {
  color: var(--green);
  border-bottom: 3px solid var(--green);
}
.comment,
.next {
  height: 30px;
  border-radius: 2px;
  color: #fff;
}
.comment {
  width: 55px;
  padding-right: 9px;
  background: #6b787f;
}
.next {
  width: 85px;
  gap: 10px;
  margin-left: 6px;
  background: var(--green);
}

.workspace {
  display: flex;
  flex: 1;
  min-height: 0;
}
.preview {
  position: relative;
  display: flex;
  flex-direction: column;
  flex: 1;
  min-width: 0;
  overflow: hidden;
  background: #efefef;
}
.grain {
  position: absolute;
  inset: 0;
  width: 100%;
  height: 100%;
}
.cards {
  position: relative;
  display: flex;
  flex-direction: column;
  align-items: center;
  flex: 1;
  gap: 80px;
  min-height: 0;
  overflow: hidden;
}
.card {
  flex: none;
  width: 896px;
  max-width: 100%;
  padding: 60px 70px 50px;
  border-radius: 3px;
  background: #fff;
  box-shadow: 0 0 24px rgb(0 0 0 / 60%);
}
.card.faded {
  opacity: 0.5;
}
.card.tail {
  height: 17px;
  padding: 0;
  border-radius: 0 0 3px 3px;
}
.card.upcoming {
  height: 60px;
  padding: 0;
}
fieldset {
  margin: 0;
  padding: 0;
  border: 0;
}
legend {
  padding: 0;
  margin-bottom: 15px;
  font: 24px/35px 'Liberation Sans', Arial, sans-serif;
  color: #4db1ea;
}
.option {
  display: flex;
  gap: 10px;
  height: 20px;
  margin-bottom: 15px;
  font: 12px/16px 'Liberation Sans', Arial, sans-serif;
  color: #444;
}
.option input {
  appearance: none;
  width: 20px;
  height: 20px;
  margin: 0;
  border: 1px solid #8c8c8c;
  border-radius: 50%;
  background: #fff;
}
.faded .option input {
  background: none;
}
.option:last-child {
  margin-bottom: 17px;
}
.progressbar {
  position: relative;
  display: flex;
  align-items: center;
  justify-content: center;
  gap: 14px;
  height: 48px;
  background: #5fafdc;
  font: 12px/16px 'Liberation Sans', Arial, sans-serif;
  color: #fff;
}
.meter {
  width: 200px;
  height: 8px;
  border-radius: 3px;
  background: #afd8ee;
}
.devices,
.feedback {
  position: absolute;
  display: flex;
  align-items: center;
  border-radius: 3px;
  background: #fff;
  box-shadow: 0 2px 8px rgb(0 0 0 / 20%);
}
.devices {
  left: 24px;
  bottom: 35px;
  gap: 13px;
  height: 50px;
  padding: 0 12px;
}
.devices button {
  width: 26px;
}
.feedback {
  right: 7px;
  bottom: 32px;
  height: 53px;
  padding: 0 18px 0 16px;
  font-size: 13px;
}
.feedback b {
  font-weight: 500;
}
.invite {
  gap: 6px;
  height: 32px;
  margin-left: 8px;
  padding: 0 13px;
  border-radius: 2px;
  background: var(--green);
  color: #fff;
  font-weight: 500;
}
.dismiss {
  margin-left: 10px;
}

.scroll {
  display: flex;
  flex-direction: column;
  align-items: center;
  background: #efeff0;
}
.inner {
  width: 19px;
  padding-right: 2px;
}
.outer {
  width: 17px;
}
.thumb {
  display: flex;
  align-items: center;
  justify-content: center;
  width: 15px;
  border: 1px solid #8f8f91;
  border-radius: 2px;
  background: linear-gradient(90deg, #f6f6f7, #e4e4e6 45%, #bfbfc5);
}
.grip {
  width: 7px;
  height: 8px;
  background: repeating-linear-gradient(#555 0 1px, #f5f5f5 1px 3px);
}
.inner .before {
  flex: 344;
}
.inner .thumb {
  flex: 202;
}
.inner .after {
  flex: 222;
}
.outer .thumb {
  flex: 782;
}
.outer .after {
  flex: 130;
}

.side {
  width: 330px;
  background: #fff;
}
.genius {
  display: flex;
  flex-direction: column;
  align-items: center;
  padding: 13px 0 25px;
  background: var(--ink);
  color: #fff;
}
.genius h2,
.genius h3,
.genius em {
  font-size: 13px;
  font-weight: 500;
  font-style: normal;
  line-height: 17px;
}
.ring {
  display: grid;
  place-items: center;
  margin: 12px 0 24px;
  font-size: 16px;
}
.ring > * {
  grid-area: 1 / 1;
}
.stats {
  display: flex;
  width: 100%;
}
.stats div {
  display: flex;
  flex-direction: column;
  align-items: center;
  flex: 1;
  height: 100px;
  text-align: center;
}
.stats div + div {
  border-left: 1px solid #222b33;
}
.stats strong {
  margin-top: 15px;
  font-size: 24px;
  font-weight: 300;
  line-height: 32px;
  color: #14bd72;
}
.done {
  padding: 24px;
}
.done h2 {
  margin: 14px 0 23px;
  font-size: 25px;
  font-weight: 300;
  line-height: 30px;
  white-space: nowrap;
}
.collect {
  width: 201px;
  height: 41px;
  border-radius: 2px;
  background: var(--green);
  color: #fff;
  font-size: 15px;
  font-weight: 500;
}
.done p {
  margin-top: 4px;
  font-size: 13px;
  line-height: 16px;
  color: #111;
}
.done p a {
  color: #007faa;
}

.taskbar {
  position: relative;
  display: flex;
  justify-content: space-between;
  height: 40px;
  overflow: hidden;
}
.wallpaper {
  position: absolute;
  inset: 0;
  width: 100%;
  height: 100%;
}
.apps-row,
.tray {
  position: relative;
  display: flex;
  align-items: center;
}
.apps-row {
  gap: 2px;
}
.app {
  width: 60px;
  height: 38px;
}
.app.start {
  width: 57px;
}
.app.open {
  border: 1px solid #55504f;
  border-radius: 3px;
  background: rgb(255 255 255 / 60%);
  box-shadow: inset 0 0 0 1px #fff;
}
.app.tan {
  background: rgb(238 218 172 / 80%);
}
.app.two {
  background: linear-gradient(90deg, #f5eeea 40%, #dfc7a4);
}
.app.stack {
  width: 52px;
  margin-right: 8px;
  box-shadow: inset 0 0 0 1px #fff, 4px 0 0 -1px #e8dcca, 4px 0 #77706c, 8px 0 0 -1px #e8dcca, 8px 0 #77706c;
}
.tray {
  gap: 8px;
}
time {
  display: flex;
  flex-direction: column;
  align-items: center;
  margin: 0 -3px 0 4px;
  font: 12px/17px var(--sys);
  color: #fff;
}
.peek {
  width: 14px;
  height: 38px;
  border: 1px solid #d9cbb4;
  background: rgb(255 255 255 / 20%);
}
</style>
